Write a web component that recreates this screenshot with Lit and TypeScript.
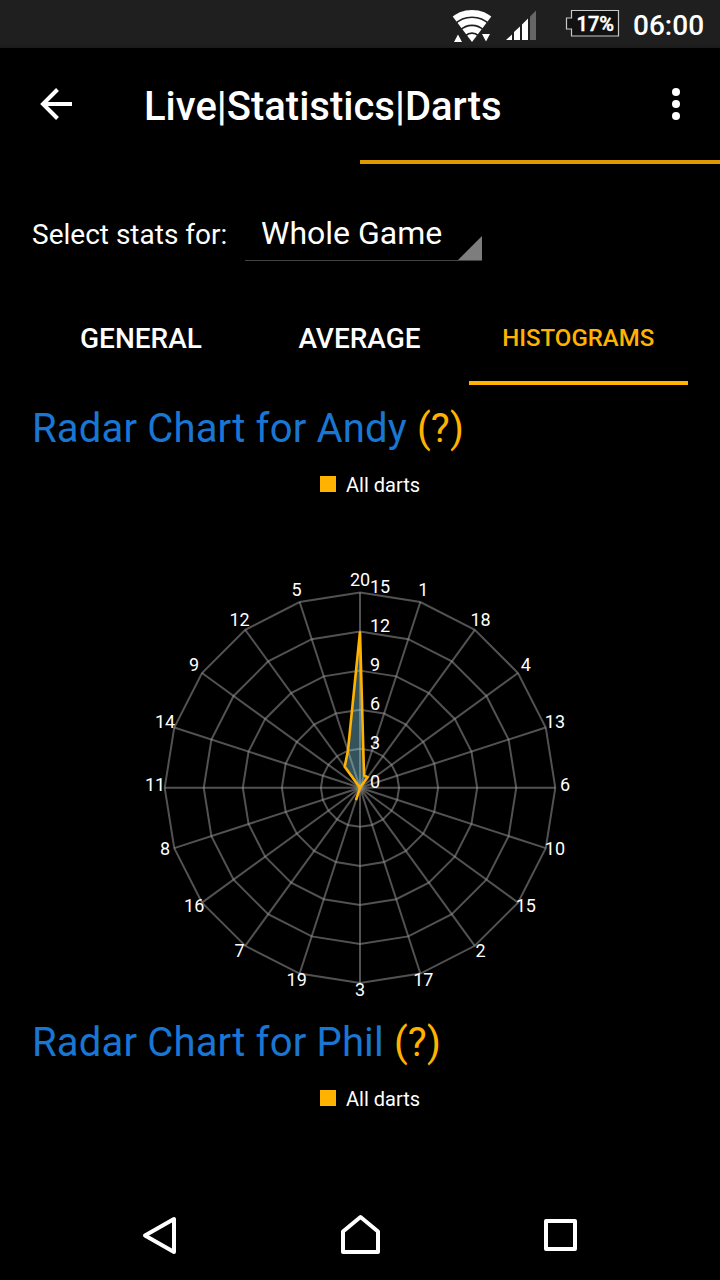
import { LitElement, html, svg, css } from "lit";
import { customElement, property } from "lit/decorators.js";

const SECTORS = [20, 1, 18, 4, 13, 6, 10, 15, 2, 17, 3, 19, 7, 16, 8, 11, 14, 9, 12, 5];
const RINGS = [3, 6, 9, 12, 15];
const MAX = 15;
const RADIUS = 195.3;
const CX = 360;
const CY = 290.8;

const point = (i: number, r: number) => {
  const a = (i / SECTORS.length) * Math.PI * 2;
  return [CX + r * Math.sin(a), CY - r * Math.cos(a)];
};
const ring = (radii: number[]) =>
  radii.map((r, i) => point(i, r).map((n) => n.toFixed(2)).join(",")).join(" ");

@customElement("radar-chart")
export class RadarChart extends LitElement {
  @property() player = "";
  @property({ attribute: false }) hits: Record<number, number> | null = null;

  static styles = css`
    :host { display: block; }
    .title { height: 57px; line-height: 58px; padding-left: 32px; font-size: 40px; color: #1976d2; letter-spacing: 0.17px; white-space: nowrap; }
    .help { color: #ffb300; }
    .legend { display: flex; justify-content: center; align-items: center; gap: 10px; height: 24px; margin-top: 16px; padding-left: 20px; font-size: 20px; color: #fff; }
    .swatch { width: 16px; height: 16px; background: #ffb300; margin-top: -2px; }
    svg { display: block; width: 720px; height: 517px; }
    .spoke { stroke: #9a9a9a; stroke-opacity: 0.53; stroke-width: 2; }
    .ring { fill: none; stroke: #9a9a9a; stroke-opacity: 0.53; stroke-width: 2; }
    .data { fill: #8cd9f0; fill-opacity: 0.38; stroke: #ffb300; stroke-width: 2.6; stroke-linejoin: miter; stroke-miterlimit: 4; }
    text { font-size: 18px; fill: #fff; }
    .sector { text-anchor: middle; }
  `;

  private chart(hits: Record<number, number>) {
    return html`<svg viewBox="0 0 720 517">
      ${SECTORS.map((_, i) => {
        const [x, y] = point(i, RADIUS);
        return svg`<line class="spoke" x1=${CX} y1=${CY} x2=${x} y2=${y} />`;
      })}
      ${RINGS.map((v) => svg`<polygon class="ring" points=${ring(SECTORS.map(() => (RADIUS * v) / MAX))} />`)}
      <polygon class="data" points=${ring(SECTORS.map((s) => (RADIUS * (hits[s] ?? 0)) / MAX))} />
      ${SECTORS.map((s, i) => {
        const [x, y] = point(i, 205);
        return svg`<text class="sector" x=${x} y=${y + 3.6}>${s}</text>`;
      })}
      ${[0, ...RINGS].map((v) => svg`<text x="370" y=${CY + 0.3 - (RADIUS * v) / MAX}>${v}</text>`)}
    </svg>`;
  }

  render() {
    return html`
      <div class="title">Radar Chart for ${this.player} <span class="help">(?)</span></div>
      <div class="legend"><span class="swatch"></span><span>All darts</span></div>
      ${this.hits ? this.chart(this.hits) : ""}
    `;
  }
}

@customElement("app-root")
export class AppRoot extends LitElement {
  static styles = css`
    :host { display: flex; flex-direction: column; width: 720px; height: 1280px; overflow: hidden; background: #000; color: #fff; font-family: Roboto, sans-serif; }
    svg { display: block; }
    .status { display: flex; flex: none; height: 48px; background: linear-gradient(#1f1f1f 44px, #1a1a1a); }
    .status-icons { width: 180px; margin-left: 440px; }
    .clock { font-size: 28px; font-weight: 500; line-height: 51px; padding-left: 13px; white-space: nowrap; }
    .toolbar { display: flex; flex: none; height: 112px; }
    .back { width: 144px; }
    .heading { flex: 1; font-size: 40px; font-weight: 500; line-height: 118px; white-space: nowrap; }
    .menu { width: 88px; }
    .page-line { flex: none; height: 4px; width: 360px; margin-left: 360px; background: #dd9a00; }
    .filter { display: flex; flex: none; height: 118px; }
    .label { width: 213px; padding-left: 32px; font-size: 28px; line-height: 141px; white-space: nowrap; }
    .spinner { width: 237px; height: 97px; }
    .choice { height: 72px; padding: 24px 0 0 16px; box-sizing: border-box; font-size: 32px; line-height: 91px; white-space: nowrap; }
    .tabs { display: grid; grid-template-columns: 218.5px 218.5px 219px; flex: none; height: 103px; padding: 0 32px; }
    .tab { font-size: 28px; font-weight: 500; text-align: center; line-height: 113px; height: 99px; }
    .tab span { margin-left: -0.5px; }
    .active { color: #ffb300; font-size: 24px; line-height: 112px; border-bottom: 4px solid #ffb300; }
    .content { flex: 1; min-height: 0; overflow: hidden; padding-top: 15px; }
    .nav { flex: none; height: 96px; }
  `;

  render() {
    return html`
      <div class="status">
        <svg class="status-icons" width="180" height="48" viewBox="440 0 180 48">
          <clipPath id="fan"><path d="M472 42 L448.500 11 V0 H495.500 V11 Z" /></clipPath>
          <g clip-path="url(#fan)" fill="none" stroke="#fff">
            <circle cx="472" cy="42" r="28.800" stroke-width="6.400" />
            <circle cx="472" cy="42" r="20.700" stroke-width="6.400" />
            <circle cx="472" cy="42" r="12.800" stroke-width="6" />
            <circle cx="472" cy="42" r="4" stroke-width="8" />
          </g>
          <path d="M454 42 L458 34.500 L462 42 Z M482 34 H490 L486 41.500 Z" fill="#fff" />
          <path d="M506 40 L512 34.500 V40 Z M514 40 V32 L520 26.500 V40 Z M522 40 V24.500 L528 18.500 V40 Z" fill="#fff" />
          <path d="M530 40 V16.500 L536 10.500 V40 Z" fill="#666" />
          <path d="M571.500 10.500 H618.500 V36 H571.500 V29 H566.500 V18 H571.500 Z" fill="#111" stroke="#c8c8c8" stroke-width="1.200" />
          <text x="576.500" y="30.500" font-size="21" font-weight="500" fill="#fff" stroke="#fff" stroke-width="0.500" textLength="37.500" lengthAdjust="spacingAndGlyphs">17%</text>
        </svg>
        <div class="clock">06:00</div>
      </div>
      <div class="toolbar">
        <svg class="back" width="144" height="112" viewBox="0 48 144 112">
          <path d="M72 104 H43 M57.500 89.500 L43 104 L57.500 118.500" fill="none" stroke="#fff" stroke-width="4" />
        </svg>
        <div class="heading">Live|Statistics|Darts</div>
        <svg class="menu" width="88" height="112" viewBox="632 48 88 112" fill="#fff">
          <circle cx="676" cy="92" r="4" /><circle cx="676" cy="104" r="4" /><circle cx="676" cy="116" r="4" />
        </svg>
      </div>
      <div class="page-line"></div>
      <div class="filter">
        <div class="label">Select stats for:</div>
        <div class="spinner">
          <div class="choice">Whole Game</div>
          <svg width="237" height="25" viewBox="0 0 237 25">
            <path d="M0 24.500 H237" stroke="#444" stroke-width="1" />
            <path d="M237 0 V24 H213 Z" fill="#7d7d7d" />
          </svg>
        </div>
      </div>
      <div class="tabs">
        <div class="tab"><span>GENERAL</span></div>
        <div class="tab"><span>AVERAGE</span></div>
        <div class="tab active"><span>HISTOGRAMS</span></div>
      </div>
      <div class="content">
        <radar-chart player="Andy" .hits=${{ 20: 12, 1: 1, 18: 1, 19: 1, 12: 2, 5: 3 }}></radar-chart>
        <radar-chart player="Phil"></radar-chart>
      </div>
      <svg class="nav" width="720" height="96" viewBox="0 1184 720 96" fill="none" stroke="#fff" stroke-width="4" stroke-linejoin="round">
        <path d="M145 1235.500 L174 1219 V1252 Z" />
        <path d="M343 1252 V1231.500 L360.500 1217 L378 1231.500 V1252 Z" />
        <rect x="546" y="1221" width="29" height="28" />
      </svg>
    `;
  }
}
